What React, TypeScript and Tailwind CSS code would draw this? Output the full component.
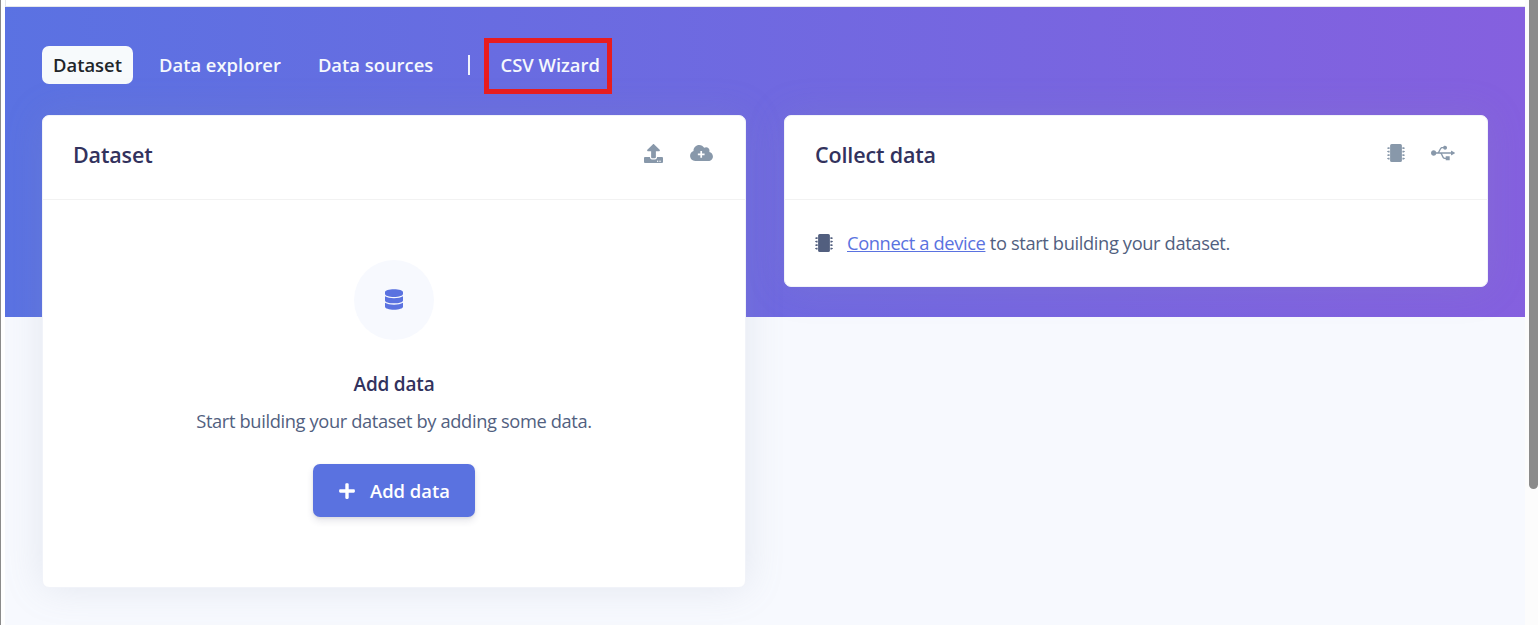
import type { ReactNode } from "react";
import { FaDatabase, FaPlus, FaUpload, FaUsb } from "react-icons/fa";

function ChipIcon({ className }: { className?: string }) {
  return (
    <svg viewBox="0 0 18 18" fill="currentColor" className={className}>
      <rect x="3.1" y="0" width="11.8" height="18" rx="1.6" />
      <path d="M.9 3.300h1.700v1.600H.9v-.4H0v-.8h.9zM.9 6.800h1.700v1.600H.9V8H0v-.8h.9zM.9 10.300h1.700v1.600H.9v-.4H0v-.8h.9zM.9 13.800h1.700v1.600H.9V15H0v-.8h.9z" />
      <path d="M17.100 3.300h-1.700v1.600h1.700v-.4h.9v-.8h-.9zM17.100 6.800h-1.700v1.600h1.700V8h.9v-.8h-.9zM17.100 10.300h-1.700v1.600h1.700v-.4h.9v-.8h-.9zM17.100 13.800h-1.700v1.600h1.700V15h.9v-.8h-.9z" />
    </svg>
  );
}

function CloudPlusIcon({ className }: { className?: string }) {
  return (
    <svg viewBox="0 0 640 448" fill="currentColor" className={className}>
      <path
        fillRule="evenodd"
        d="M537.600 194.600c4.100-10.700 6.400-22.400 6.400-34.600 0-53-43-96-96-96-19.700 0-38.100 6-53.300 16.200C367 32.200 315.300 0 256 0 167.600 0 96 71.600 96 160c0 2.700.1 5.400.2 8.100C40.200 187.800 0 241.200 0 304c0 79.500 64.500 144 144 144h368c70.700 0 128-57.300 128-128 0-61.900-44-113.600-102.400-125.400zM288 166h48v70h70v48h-70v70h-48v-70h-70v-48h70z"
      />
    </svg>
  );
}

function Card({ title, icons, children, className = "" }: { title: string; icons: ReactNode; children: ReactNode; className?: string }) {
  return (
    <section
      className={`flex w-[704px] flex-none flex-col rounded-[7px] border border-[#f1f3f9] bg-white shadow-[0_0_38px_0_rgba(136,152,170,0.18)] ${className}`}
    >
      <header className="flex h-[84px] flex-none items-center justify-between border-b border-black/5 pb-1.5 pl-[30px] pr-8">
        <h2 className="text-[21.5px] font-semibold leading-8 tracking-[-0.15px] text-[#32325d]">{title}</h2>
        <div className="flex items-center pb-1 text-[#8898aa]">{icons}</div>
      </header>
      {children}
    </section>
  );
}

export default function App() {
  return (
    <div className="flex h-[625px] w-[1538px] overflow-hidden border-l border-[#8b8b8b] bg-white font-['Open_Sans','Noto_Sans',sans-serif] text-[18.3px] text-[#525f7f]">
      <div className="ml-1 flex w-[1520px] flex-none flex-col overflow-hidden">
        <div className="h-[7px] flex-none border-b border-l border-[#e5e7eb] bg-white" />
        <main className="h-[618px] bg-[#f7f9fe] bg-[linear-gradient(87deg,#5a72e2_0%,#8560df_100%)] bg-[length:100%_310px] bg-no-repeat pl-[37px] pt-[39px]">
          <nav className="flex h-[38px] items-center text-[18.4px] font-semibold text-[#f5f8fd]">
            <a className="flex h-[38px] w-[91px] items-center justify-center rounded-[7px] bg-[#f7fafc] text-[#212529]">Dataset</a>
            <a className="ml-[26px]">Data explorer</a>
            <a className="ml-[37px]">Data sources</a>
            <span className="ml-[35px] h-5 w-0.5 bg-[#f0f2fc]" />
            <a className="-mb-[9px] -mt-2 ml-[14px] flex h-14 w-32 items-center justify-center border-[5px] border-[#e91c1e] pb-0.5 pl-1">CSV Wizard</a>
          </nav>
          <div className="mt-[31px] flex items-start gap-[38px]">
            <Card
              title="Dataset"
              className="h-[473px]"
              icons={
                <>
                  <FaUpload className="mt-px h-[19px] w-[19px]" />
                  <CloudPlusIcon className="ml-[27px] h-4 w-[23px]" />
                </>
              }
            >
              <div className="flex flex-col items-center pt-[60px]">
                <div className="flex h-20 w-20 items-center justify-center rounded-full bg-[#f7f9fe] pb-px text-[#5a72e0]">
                  <FaDatabase className="h-[21px] w-[18px]" />
                </div>
                <h3 className="mt-[30px] text-[19px] font-semibold leading-7 tracking-[-0.2px] text-[#32325d]">Add data</h3>
                <p className="mt-[9px] leading-7 tracking-[-0.37px]">Start building your dataset by adding some data.</p>
                <button className="mt-[29px] flex h-[53px] w-[162px] items-center rounded-[7px] bg-[#5a72e0] pl-[25px] text-[18.4px] font-semibold text-white shadow-[0_4px_7px_rgba(50,50,93,0.12),0_1px_3px_rgba(0,0,0,0.08)]">
                  <FaPlus className="h-[18px] w-[18px]" />
                  <span className="ml-[14px]">Add data</span>
                </button>
              </div>
            </Card>
            <Card
              title="Collect data"
              className="h-[172px]"
              icons={
                <>
                  <ChipIcon className="h-[18px] w-[18px]" />
                  <FaUsb className="ml-[26px] h-[24px] w-[24px]" />
                </>
              }
            >
              <div className="flex h-[87px] items-center pl-[30px]">
                <ChipIcon className="h-[18px] w-[18px]" />
                <p className="ml-[14px] tracking-[-0.37px]">
                  <a className="text-[#5a72e0] underline">Connect a device</a> to start building your dataset.
                </p>
              </div>
            </Card>
          </div>
        </main>
      </div>
      <div className="flex w-[13px] flex-none justify-end bg-[#fcfcfc]">
        <div className="h-[489px] w-[9px] rounded-b-[5px] bg-[#8b8b8b]" />
      </div>
    </div>
  );
}
